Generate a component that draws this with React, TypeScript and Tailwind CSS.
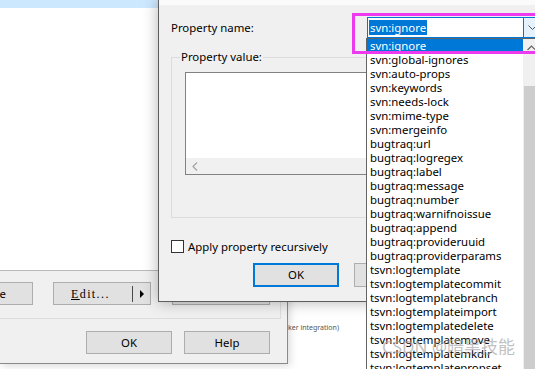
import React from "react";

const items = [
  "svn:ignore",
  "svn:global-ignores",
  "svn:auto-props",
  "svn:keywords",
  "svn:needs-lock",
  "svn:mime-type",
  "svn:mergeinfo",
  "bugtraq:url",
  "bugtraq:logregex",
  "bugtraq:label",
  "bugtraq:message",
  "bugtraq:number",
  "bugtraq:warnifnoissue",
  "bugtraq:append",
  "bugtraq:provideruuid",
  "bugtraq:providerparams",
  "tsvn:logtemplate",
  "tsvn:logtemplatecommit",
  "tsvn:logtemplatebranch",
  "tsvn:logtemplateimport",
  "tsvn:logtemplatedelete",
  "tsvn:logtemplatemove",
  "tsvn:logtemplatemkdir",
  "tsvn:logtemplatepropset",
];

export default function App() {
  return (
    <div className="relative w-[535px] h-[369px] overflow-hidden bg-white font-['Noto_Sans',sans-serif] text-[11.4px] text-black">
      {/* back-most window text */}
      <div className="absolute left-[288px] top-[324px] text-[7px] leading-none text-[#555] whitespace-nowrap">
        ker integration)
      </div>

      {/* middle dialog (properties) */}
      <div className="absolute left-0 top-0 w-[288px] h-[364px] bg-[#f0f0f0] border-r border-b border-[#8a8a8a] shadow-[2px_2px_8px_rgba(0,0,0,0.15)] flex flex-col">
        <div className="w-[281px] h-[319px] border-r border-b border-[#dcdcdc] flex flex-col">
          <div className="h-[271px] bg-white border-b border-[#b9b9b9] flex flex-col">
            <div className="h-[8px] bg-[#cce8ff]" />
          </div>
          <div className="flex items-start mt-[11px]">
            <div className="ml-[-61px] w-[94px] h-[23px] bg-[#e1e1e1] border border-[#adadad] flex items-center justify-end pr-[26px]">
              Remove
            </div>
            <div className="ml-[20px] w-[98px] h-[23px] bg-[#e1e1e1] border border-[#adadad] flex items-center pl-[17px]">
              <span className="w-[61px] font-['Liberation_Serif',serif] text-[12px] tracking-[1.4px]">
                <span className="underline">E</span>dit...
              </span>
              <div className="w-px h-[16px] bg-[#4a4a4a]" />
              <div className="ml-[7px] w-0 h-0 border-y-[4px] border-y-transparent border-l-[4px] border-l-black" />
            </div>
            <div className="ml-[21px] w-[98px] h-[23px] bg-[#e1e1e1] border border-[#adadad]" />
          </div>
        </div>
        <div className="flex gap-[12px] pl-[86px] mt-[12px]">
          <div className="w-[86px] h-[23px] bg-[#e1e1e1] border border-[#adadad] flex items-center justify-center">
            OK
          </div>
          <div className="w-[86px] h-[23px] bg-[#e1e1e1] border border-[#adadad] flex items-center justify-center">
            Help
          </div>
        </div>
      </div>

      {/* front dialog (add property) */}
      <div className="absolute left-[158px] top-0 w-[420px] h-[302px] bg-[#f0f0f0] border-l border-b border-[#5e5e5e] shadow-[0_0_14px_rgba(0,0,0,0.3)] flex flex-col">
        <div className="h-[5px] bg-[#fbfbfb]" />
        <div className="flex flex-col pl-[12px]">
          <div className="flex items-center mt-[12px] h-[21px]">
            <div className="w-[196px] pt-[1px]">Property name:</div>
            <div className="w-[157px] h-[21px] bg-white border border-[#0078d7] flex items-center">
              <span className="ml-[1px] bg-[#0078d7] text-white px-[1px] leading-[15px]">svn:ignore</span>
            </div>
            <div className="w-[17px] h-[21px] bg-[#e5f1fb] border-y border-r border-[#0078d7] flex items-center justify-center">
              <svg width="9" height="6" viewBox="0 0 9 6">
                <path d="M0.5 0.5 L4.5 4.5 L8.5 0.5" fill="none" stroke="#555" strokeWidth="1" />
              </svg>
            </div>
          </div>

          <div className="relative mt-[19px] w-[345px] h-[161px] border border-[#dcdcdc] pt-[14px] pl-[13px]">
            <span className="absolute left-[8px] top-[-9px] bg-[#f0f0f0] px-[1px] leading-[16px]">
              Property value:
            </span>
            <div className="w-[320px] h-[103px] bg-white border border-[#828282] flex flex-col">
              <div className="flex-1" />
              <div className="h-[16px] bg-[#f0f0f0] flex items-center pl-[6px]">
                <svg width="6" height="9" viewBox="0 0 6 9">
                  <path d="M5 0.5 L1 4.5 L5 8.5" fill="none" stroke="#a6a6a6" strokeWidth="1.3" />
                </svg>
              </div>
            </div>
          </div>

          <div className="flex items-center mt-[22px] h-[13px]">
            <div className="w-[13px] h-[13px] bg-white border border-[#333]" />
            <span className="ml-[4px]">Apply property recursively</span>
          </div>

          <div className="flex mt-[10px] ml-[82px] gap-[15px]">
            <div className="w-[86px] h-[24px] bg-[#e1e1e1] border-2 border-[#0078d7] flex items-center justify-center">
              OK
            </div>
            <div className="w-[86px] h-[24px] bg-[#e1e1e1] border border-[#adadad] flex items-center justify-center">
              Cancel
            </div>
          </div>
        </div>
      </div>

      {/* dropdown list */}
      <div className="absolute left-[366px] top-[38px] w-[180px] h-[340px] bg-white border border-[#646464] flex">
        <div className="w-[156px] flex flex-col">
          {items.map((it, i) => (
            <div
              key={it}
              className={
                i === 0
                  ? "h-[14px] leading-[14px] pl-[3px] bg-[#0078d7] text-white whitespace-nowrap"
                  : "h-[14px] leading-[14px] pl-[3px] whitespace-nowrap"
              }
            >
              {it}
            </div>
          ))}
        </div>
        <div className="w-[17px] flex flex-col bg-[#f0f0f0]">
          <div className="h-[17px] flex items-center justify-center">
            <svg width="9" height="6" viewBox="0 0 9 6">
              <path d="M0.5 5 L4.5 1 L8.5 5" fill="none" stroke="#606060" strokeWidth="1.2" />
            </svg>
          </div>
          <div className="h-[30px]" />
          <div className="flex-1 bg-[#cdcdcd] mx-[1px]" />
        </div>
      </div>

      {/* highlight rectangle */}
      <div className="absolute left-[352px] top-[13px] w-[200px] h-[41px] border-[3px] border-[#ee3aee]" />

      {/* watermark */}
      <div className="absolute left-[382px] top-[337px] text-[17px] leading-[20px] text-[rgba(165,165,165,0.7)] font-['Noto_Sans','Noto_Sans_CJK_SC',sans-serif] whitespace-nowrap">
        CSDN @暗黑技能
      </div>
    </div>
  );
}
